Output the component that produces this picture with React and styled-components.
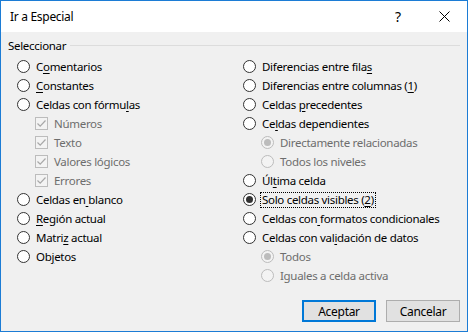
import styled, { createGlobalStyle } from 'styled-components';

const GlobalStyle = createGlobalStyle`
  html, body {
    margin: 0;
    padding: 0;
    background: #ffffff;
  }
  body {
    font-family: "Segoe UI", "Noto Sans", "Open Sans", sans-serif;
    font-size: 11.5px;
    letter-spacing: -0.3px;
    color: #000000;
  }
`

const Window = styled.div`
  width: 468px;
  height: 332px;
  box-sizing: border-box;
  border: 1px solid #1c7cd5;
  display: flex;
  flex-direction: column;
  background: #f0f0f0;
`

const TitleBar = styled.div`
  height: 31px;
  background: #ffffff;
  display: flex;
  align-items: center;
  padding-left: 9px;
  flex-shrink: 0;
`

const Title = styled.div`
  flex: 1;
  font-size: 12px;
`

const TitleButton = styled.div`
  width: 46px;
  height: 31px;
  display: flex;
  align-items: center;
  justify-content: center;
  font-size: 14px;
`

const Body = styled.div`
  flex: 1;
  display: flex;
  flex-direction: column;
  padding: 6px 7px 9px 7px;
`

const Legend = styled.div`
  display: flex;
  align-items: center;
  height: 14px;
  gap: 4px;
`

const LegendLine = styled.div`
  flex: 1;
  height: 1px;
  background: #dcdcdc;
`

const Columns = styled.div`
  display: grid;
  grid-template-columns: 226px 1fr;
  padding-left: 9px;
  margin-top: 5px;
`

const Column = styled.div`
  display: flex;
  flex-direction: column;
`

const Row = styled.div`
  height: 19px;
  display: flex;
  align-items: center;
  gap: 4px;
  padding-left: ${p => (p.$indent ? 18 : 0)}px;
  color: ${p => (p.$disabled ? '#6d6d6d' : '#000000')};
  white-space: nowrap;
`

const RadioMark = styled.span`
  width: 13px;
  height: 13px;
  box-sizing: border-box;
  border-radius: 50%;
  border: 1px solid ${p => (p.$disabled ? '#bcbcbc' : '#333333')};
  background: ${p => (p.$disabled ? '#f3f3f3' : '#ffffff')};
  display: flex;
  align-items: center;
  justify-content: center;
  flex-shrink: 0;

  &::after {
    content: '';
    display: ${p => (p.$checked ? 'block' : 'none')};
    width: 7px;
    height: 7px;
    border-radius: 50%;
    background: ${p => (p.$disabled ? '#bcbcbc' : '#333333')};
  }
`

const CheckMark = styled.span`
  width: 13px;
  height: 13px;
  box-sizing: border-box;
  border: 1px solid #bcbcbc;
  background: #f3f3f3;
  display: flex;
  align-items: center;
  justify-content: center;
  flex-shrink: 0;
`

const Label = styled.span`
  padding: 0 1px;
  border: 1px dotted ${p => (p.$focus ? '#000000' : 'transparent')};
  line-height: 14px;
`

const Key = styled.span`
  text-decoration: underline;
  text-underline-offset: 2px;
`

const Buttons = styled.div`
  margin-top: auto;
  display: flex;
  justify-content: flex-end;
  gap: 10px;
`

const Button = styled.div`
  width: 74px;
  height: 22px;
  box-sizing: border-box;
  background: #e1e1e1;
  border: ${p => (p.$primary ? '2px solid #0078d7' : '1px solid #adadad')};
  display: flex;
  align-items: center;
  justify-content: center;
  font-size: 12px;
`

const label = (text, key) => {
  if (key == null) return text;
  return (
    <>
      {text.slice(0, key)}
      <Key>{text[key]}</Key>
      {text.slice(key + 1)}
    </>
  );
};

const Radio = ({ text, k, checked, disabled, indent, focus }) => (
  <Row $indent={indent} $disabled={disabled}>
    <RadioMark $checked={checked} $disabled={disabled} />
    <Label $focus={focus}>{label(text, k)}</Label>
  </Row>
);

const Check = ({ text }) => (
  <Row $indent $disabled>
    <CheckMark>
      <svg width="11" height="11" viewBox="0 0 11 11">
        <path d="M1.5 5.5 L4.2 8.2 L9.5 2.5" fill="none" stroke="#a8a8a8" strokeWidth="1.2" />
      </svg>
    </CheckMark>
    <Label>{text}</Label>
  </Row>
);

const App = () => (
  <>
    <GlobalStyle />
    <Window>
      <TitleBar>
        <Title>Ir a Especial</Title>
        <TitleButton>?</TitleButton>
        <TitleButton>
          <svg width="11" height="11" viewBox="0 0 11 11">
            <path d="M0.5 0.5 L10.5 10.5 M10.5 0.5 L0.5 10.5" stroke="#000" strokeWidth="1" />
          </svg>
        </TitleButton>
      </TitleBar>
      <Body>
        <Legend>
          <span>Seleccionar</span>
          <LegendLine />
        </Legend>
        <Columns>
          <Column>
            <Radio text="Comentarios" k={1} />
            <Radio text="Constantes" k={0} />
            <Radio text="Celdas con fórmulas" k={16} />
            <Check text="Números" />
            <Check text="Texto" />
            <Check text="Valores lógicos" />
            <Check text="Errores" />
            <Radio text="Celdas en blanco" k={9} />
            <Radio text="Región actual" k={0} />
            <Radio text="Matriz actual" k={5} />
            <Radio text="Objetos" k={2} />
          </Column>
          <Column>
            <Radio text="Diferencias entre filas" k={22} />
            <Radio text="Diferencias entre columnas (1)" k={28} />
            <Radio text="Celdas precedentes" k={7} />
            <Radio text="Celdas dependientes" k={2} />
            <Radio text="Directamente relacionadas" indent disabled checked />
            <Radio text="Todos los niveles" indent disabled />
            <Radio text="Última celda" k={2} />
            <Radio text="Solo celdas visibles (2)" k={22} checked focus />
            <Radio text="Celdas con formatos condicionales" k={10} />
            <Radio text="Celdas con validación de datos" k={14} />
            <Radio text="Todos" indent disabled checked />
            <Radio text="Iguales a celda activa" indent disabled />
          </Column>
        </Columns>
        <Buttons>
          <Button $primary>Aceptar</Button>
          <Button>Cancelar</Button>
        </Buttons>
      </Body>
    </Window>
  </>
);

export default App;
